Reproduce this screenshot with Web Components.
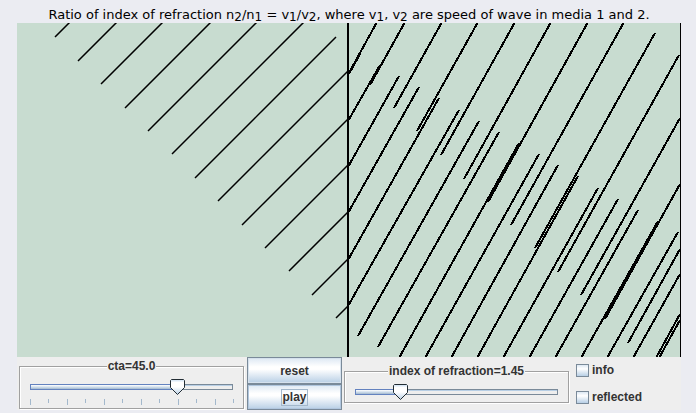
<!DOCTYPE html>
<html lang="en">
<head>
<meta charset="utf-8">
<title>Refraction of a wave</title>
<style>
  html { background: #ebecf2; }
  body { margin: 0; }
</style>
</head>
<body>
<refraction-app></refraction-app>

<script>
const define = (name, html, setup) => customElements.define(name, class extends HTMLElement {
  connectedCallback() {
    if (this.shadowRoot) return;
    const root = this.attachShadow({ mode: 'open' });
    const t = document.createElement('template');
    t.innerHTML = html;
    root.append(t.content.cloneNode(true));
    if (setup) setup(this, root);
  }
});

// Wave crests as x1, y1, x2, y2
const incident = [];
for (let k = 0; k < 13; k++) {
  const x = Math.round(54.5 + 23.42 * k), y = Math.round(37.4 + 23.4 * k);
  const top = k < 6 ? 22 : k === 6 ? 37 : x + y - 348;
  incident.push([x, y, x + y - top, top]);
}
const refracted = [
  [350,71,377,22],[370,85,405,22],[394,108,442,22],[417,131,478,22],[441,155,515,22],
  [464,179,551,22],[488,202,588,22],[511,225,624,22],[535,248,655,33],[558,272,679,55],
  [581,295,680,118],[605,319,680,184],[628,343,680,249],[656,358,680,314],
  [349,74,360,54],[348,121,380,65],[348,167,399,76],[348,213,419,87],[348,260,439,98],
  [348,306,459,110],[358,336,479,121],[378,347,499,132],[399,358,519,143],[425,358,539,154],
  [451,358,558,165],[477,358,578,176],[503,358,598,188],[529,358,618,199],[555,358,638,210],
  [581,358,658,221],[607,358,678,232],[633,358,680,274],[659,358,680,320]
];

define('wave-view', `
  <style>
    :host { display: block; background: #c8dcd0; border-right: 1px solid #000; }
    svg { display: block; width: 100%; height: auto; }
    g { stroke: #000; fill: none; shape-rendering: crispEdges; }
    #in { shape-rendering: geometricPrecision; }
  </style>
  <svg viewBox="17 23 663 334" role="img" aria-label="Wavefronts crossing the boundary between two media">
    <g id="in" stroke-width="1.5"></g><g id="out" stroke-width="2"></g>
    <g stroke-width="2"><path d="M348 23V357"/></g>
  </svg>`, (host, root) => {
  const draw = (id, lines) => {
    const p = document.createElementNS('http://www.w3.org/2000/svg', 'path');
    p.setAttribute('d', lines.map(([a, b, c, d]) => `M${a} ${b}L${c} ${d}`).join(''));
    root.getElementById(id).append(p);
  };
  draw('in', incident);
  draw('out', refracted);
});

define('titled-slider', `
  <style>
    :host { display: block; }
    fieldset { margin: 0; min-width: 0; border: 1px solid #a0a0a0; padding: 6px 3px 2px;
      box-shadow: 1px 1px #fff, inset 1px 1px #fff; }
    legend { margin: 0 auto; padding: 0 1px; height: 14px; line-height: 15px; background: #eee; }
    .s { display: grid; }
    .s > * { grid-area: 1 / 1; }
    .track { align-self: center; height: 6px; margin: 0 7px; box-sizing: border-box;
      border: 1px solid #7a8a99; background: linear-gradient(#b8cfe5 1px, #eee 1px); }
    .fill { height: 4px; margin: -1px 0 -1px -1px; width: var(--p); border: 1px solid #6382bf;
      background: linear-gradient(#fff, #c8d8e8 60%, #a3b8cc); }
    input { appearance: none; -webkit-appearance: none; width: 100%; height: 16px; margin: 0; background: none; outline: none; }
    input::-webkit-slider-thumb { -webkit-appearance: none; width: 15px; height: 16px; border: 0;
      background: url("data:image/svg+xml,%3Csvg xmlns='http://www.w3.org/2000/svg' width='15' height='16'%3E%3ClinearGradient id='g' x2='0' y2='1'%3E%3Cstop stop-color='%23c8ddf2'/%3E%3Cstop offset='.2' stop-color='%23fff'/%3E%3Cstop offset='.5' stop-color='%23fff'/%3E%3Cstop offset='1' stop-color='%23b8cfe5'/%3E%3C/linearGradient%3E%3Cpath d='M1.5.5h12l1 1v7l-7 7l-7-7v-7z' fill='url(%23g)' stroke='%23222c33'/%3E%3C/svg%3E") no-repeat; }
    .ticks { display: flex; justify-content: space-between; height: 6px; margin: 4px 6px 1px 7px; }
    .ticks i { width: 1px; height: 6px; background: #a3b8cc; }
    .ticks i:nth-child(even) { height: 4px; }
  </style>
  <fieldset>
    <legend><label for="r"><slot></slot></label></legend>
    <div class="s"><div class="track"><div class="fill"></div></div><input id="r" type="range"></div>
  </fieldset>`, (host, root) => {
  const r = root.getElementById('r');
  for (const a of ['min', 'max', 'step', 'value']) r.setAttribute(a, host.getAttribute(a));
  const paint = () => root.querySelector('.track').style.setProperty('--p', (r.value - r.min) / (r.max - r.min) * 100 + '%');
  paint();
  r.addEventListener('input', () => {
    paint();
    host.textContent = host.getAttribute('name') + '=' + (+r.value).toFixed(+host.getAttribute('digits'));
  });
  const n = +host.getAttribute('ticks');
  if (n) {
    const t = document.createElement('div');
    t.className = 'ticks';
    t.innerHTML = '<i></i>'.repeat(n);
    root.querySelector('fieldset').append(t);
  }
});

define('metal-button', `
  <style>
    :host { display: grid; }
    button { font: inherit; color: inherit; margin: 0; padding: 1px 0 0; border: 1px solid #7a8a99; outline: none;
      background: linear-gradient(#dde8f3, #fff 35%, #fff 45%, #b8cfe5); box-shadow: inset 0 0 0 1px #d5e1ed; }
    :host([current]) button { box-shadow: inset 0 0 0 1px #b0c6de; }
    span { display: inline-block; line-height: 15px; border: 1px solid transparent; }
    :host([current]) span { border-color: #a3b8cc; }
  </style>
  <button type="button"><span><slot></slot></span></button>`);

define('metal-check', `
  <style>
    :host { display: block; }
    label { display: flex; align-items: center; gap: 3px; line-height: 14px; }
    input { appearance: none; -webkit-appearance: none; box-sizing: border-box; width: 13px; height: 13px; margin: 0;
      border: 1px solid #7a8a99; background: linear-gradient(#dde8f3, #fff 35%, #b8cfe5); }
    input:checked { box-shadow: inset 0 0 0 3px #dde8f3; background: #333; }
  </style>
  <label><input type="checkbox"><slot></slot></label>`);

define('refraction-app', `
  <style>
    :host { display: block; padding: 6px 15px 0 17px; }
    h1 { margin: 0; font: 13px/17px Verdana, "DejaVu Sans", sans-serif; text-align: center; color: #000; white-space: nowrap; }
    sub { font-size: 12px; line-height: 0; vertical-align: -2px; }
    .bar { display: grid; grid-template-columns: 1fr 96px 1fr 110px; gap: 2px; padding-left: 2px;
      background: #eee; color: #333; font: bold 12px "Liberation Sans", Arial, sans-serif; align-items: start; }
    .cta { margin: 2px 0 1px; }
    .index { margin-top: 7px; }
    .buttons { display: grid; grid-template-rows: 27px 26px; padding-left: 1px; }
    .checks { display: grid; gap: 13px; padding: 6px 0 0 5px; }
  </style>
  <h1>Ratio of index of refraction n<sub>2</sub>/n<sub>1</sub> = v<sub>1</sub>/v<sub>2</sub>, where v<sub>1</sub>, v<sub>2</sub> are speed of wave in media 1 and 2.</h1>
  <wave-view></wave-view>
  <div class="bar">
    <titled-slider class="cta" name="cta" digits="1" min="5" max="60" step="0.5" value="45" ticks="12">cta=45.0</titled-slider>
    <div class="buttons"><metal-button>reset</metal-button><metal-button current>play</metal-button></div>
    <titled-slider class="index" name="index of refraction" digits="2" min="1" max="3" step="0.01" value="1.45">index of refraction=1.45</titled-slider>
    <div class="checks"><metal-check>info</metal-check><metal-check>reflected</metal-check></div>
  </div>`);
</script>
</body>
</html>
